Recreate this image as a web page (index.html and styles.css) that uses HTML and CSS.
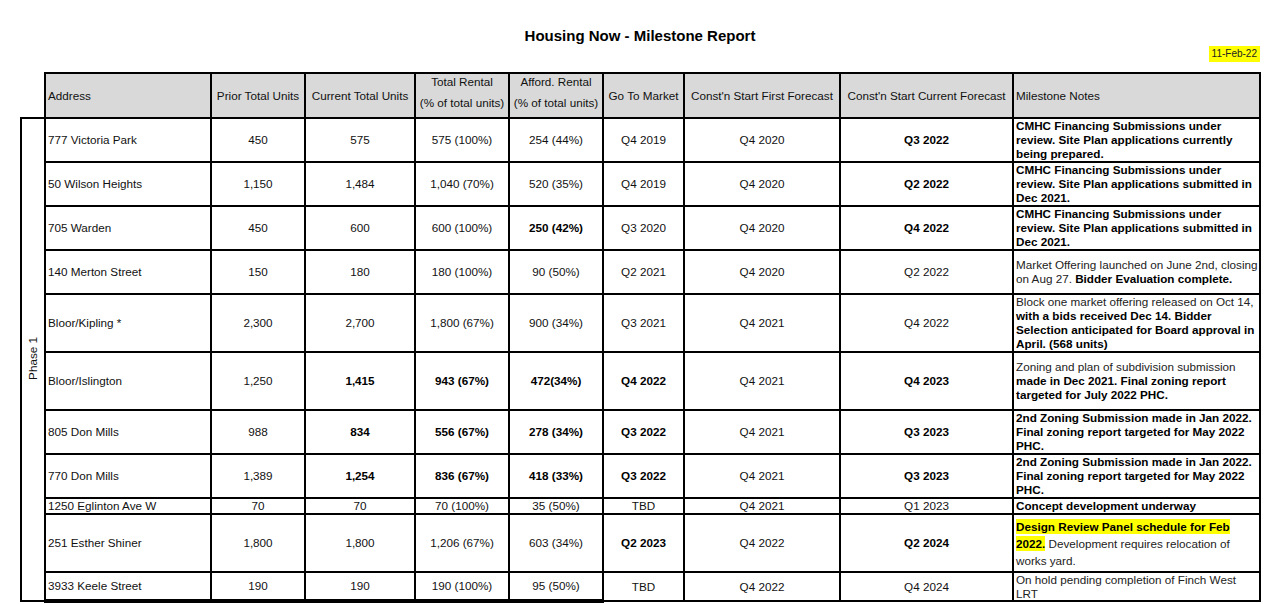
FILE: index.html
```html
<!DOCTYPE html>
<html lang="en">
<head>
<meta charset="UTF-8">
<meta name="viewport" content="width=device-width, initial-scale=1.0">
<title>Housing Now - Milestone Report</title>
<link rel="stylesheet" href="styles.css">
</head>
<body>

<h1 class="title">Housing Now - Milestone Report</h1>
<div class="date-row"><span class="date">11-Feb-22</span></div>

<table class="report">
    <colgroup>
        <col style="width:24px">
        <col style="width:166px">
        <col style="width:94px">
        <col style="width:110px">
        <col style="width:94px">
        <col style="width:94px">
        <col style="width:81px">
        <col style="width:156px">
        <col style="width:173px">
        <col style="width:247px">
    </colgroup>
    <thead>
        <tr class="head-row">
            <th class="blank"></th>
            <th class="left">Address</th>
            <th>Prior Total Units</th>
            <th>Current Total Units</th>
            <th class="two"><div class="l1">Total Rental</div><div class="l2">(% of total units)</div></th>
            <th class="two"><div class="l1">Afford. Rental</div><div class="l2">(% of total units)</div></th>
            <th>Go To Market</th>
            <th>Const'n Start First Forecast</th>
            <th>Const'n Start Current Forecast</th>
            <th class="left">Milestone Notes</th>
        </tr>
    </thead>
    <tbody>
        <tr class="h44">
            <td class="phase" rowspan="11"><span>Phase 1</span></td>
            <td class="addr">777 Victoria Park</td>
            <td>450</td>
            <td>575</td>
            <td>575 (100%)</td>
            <td>254 (44%)</td>
            <td>Q4 2019</td>
            <td>Q4 2020</td>
            <td class="b">Q3 2022</td>
            <td class="notes b">CMHC Financing Submissions under review. Site Plan applications currently being prepared.</td>
        </tr>
        <tr class="h44">
            <td class="addr">50 Wilson Heights</td>
            <td>1,150</td>
            <td>1,484</td>
            <td>1,040 (70%)</td>
            <td>520 (35%)</td>
            <td>Q4 2019</td>
            <td>Q4 2020</td>
            <td class="b">Q2 2022</td>
            <td class="notes b">CMHC Financing Submissions under review. Site Plan applications submitted in Dec 2021.</td>
        </tr>
        <tr class="h44">
            <td class="addr">705 Warden</td>
            <td>450</td>
            <td>600</td>
            <td>600 (100%)</td>
            <td class="b">250 (42%)</td>
            <td>Q3 2020</td>
            <td>Q4 2020</td>
            <td class="b">Q4 2022</td>
            <td class="notes b">CMHC Financing Submissions under review. Site Plan applications submitted in Dec 2021.</td>
        </tr>
        <tr class="h44">
            <td class="addr">140 Merton Street</td>
            <td>150</td>
            <td>180</td>
            <td>180 (100%)</td>
            <td>90 (50%)</td>
            <td>Q2 2021</td>
            <td>Q4 2020</td>
            <td>Q2 2022</td>
            <td class="notes">Market Offering launched on June 2nd, closing on Aug 27. <b>Bidder Evaluation complete.</b></td>
        </tr>
        <tr class="h58">
            <td class="addr">Bloor/Kipling *</td>
            <td>2,300</td>
            <td>2,700</td>
            <td>1,800 (67%)</td>
            <td>900 (34%)</td>
            <td>Q3 2021</td>
            <td>Q4 2021</td>
            <td>Q4 2022</td>
            <td class="notes">Block one market offering released on Oct 14, <b>with a bids received Dec 14. Bidder Selection anticipated for Board approval in April. (568 units)</b></td>
        </tr>
        <tr class="h58">
            <td class="addr">Bloor/Islington</td>
            <td>1,250</td>
            <td class="b">1,415</td>
            <td class="b">943 (67%)</td>
            <td class="b">472(34%)</td>
            <td class="b">Q4 2022</td>
            <td>Q4 2021</td>
            <td class="b">Q4 2023</td>
            <td class="notes">Zoning and plan of subdivision submission <b>made in Dec 2021. Final zoning report targeted for July 2022 PHC.</b></td>
        </tr>
        <tr class="h44">
            <td class="addr">805 Don Mills</td>
            <td>988</td>
            <td class="b">834</td>
            <td class="b">556 (67%)</td>
            <td class="b">278 (34%)</td>
            <td class="b">Q3 2022</td>
            <td>Q4 2021</td>
            <td class="b">Q3 2023</td>
            <td class="notes b">2nd Zoning Submission made in Jan 2022. Final zoning report targeted for May 2022 PHC.</td>
        </tr>
        <tr class="h44">
            <td class="addr">770 Don Mills</td>
            <td>1,389</td>
            <td class="b">1,254</td>
            <td class="b">836 (67%)</td>
            <td class="b">418 (33%)</td>
            <td class="b">Q3 2022</td>
            <td>Q4 2021</td>
            <td class="b">Q3 2023</td>
            <td class="notes b">2nd Zoning Submission made in Jan 2022. Final zoning report targeted for May 2022 PHC.</td>
        </tr>
        <tr class="h15">
            <td class="addr">1250 Eglinton Ave W</td>
            <td>70</td>
            <td>70</td>
            <td>70 (100%)</td>
            <td>35 (50%)</td>
            <td>TBD</td>
            <td>Q4 2021</td>
            <td>Q1 2023</td>
            <td class="notes b">Concept development underway</td>
        </tr>
        <tr class="h58">
            <td class="addr">251 Esther Shiner</td>
            <td>1,800</td>
            <td>1,800</td>
            <td>1,206 (67%)</td>
            <td>603 (34%)</td>
            <td class="b">Q2 2023</td>
            <td>Q4 2022</td>
            <td class="b">Q2 2024</td>
            <td class="notes tall"><b class="mark">Design Review Panel schedule for Feb 2022.</b> Development requires relocation of works yard.</td>
        </tr>
        <tr class="h29 last">
            <td class="addr thick">3933 Keele Street</td>
            <td class="thick">190</td>
            <td class="thick">190</td>
            <td class="thick">190 (100%)</td>
            <td class="thick">95 (50%)</td>
            <td>TBD</td>
            <td>Q4 2022</td>
            <td>Q4 2024</td>
            <td class="notes">On hold pending completion of Finch West LRT</td>
        </tr>
    </tbody>
</table>

</body>
</html>
```

FILE: styles.css
```css
body {
    margin: 0;
    font-family: "Liberation Sans", Arial, sans-serif;
    color: #111;
    background: #fff;
}
.title {
    margin: 0;
    padding-top: 27px;
    font-size: 15px;
    line-height: 17px;
    font-weight: bold;
    text-align: center;
    color: #000;
}
.date-row {
    height: 16px;
    line-height: 16px;
    text-align: right;
    padding-right: 20px;
}
.date {
    display: inline-block;
    background: #ffff00;
    font-size: 10px;
    padding: 0 3px;
    color: #222;
}
.report {
    margin: 12px 0 0 20px;
    border-collapse: collapse;
    table-layout: fixed;
    width: 1241px;
}
.report th,
.report td {
    border: 2px solid #000;
    padding: 0 3px;
    font-size: 11.7px;
    line-height: 14px;
    font-weight: normal;
    text-align: center;
    vertical-align: middle;
    overflow: hidden;
}
.report th {
    background: #d9d9d9;
    white-space: nowrap;
    padding: 0 2px;
}
.report th.blank {
    background: none;
    border: none;
}
.report th.two {
    vertical-align: top;
}
.two .l1 {
    line-height: 16px;
}
.two .l2 {
    line-height: 26px;
}
.report .left,
.report .addr,
.report .notes {
    text-align: left;
}
.report .addr {
    padding-left: 2px;
}
.head-row {
    height: 45px;
}
.h44 { height: 44px; }
.h58 { height: 58px; }
.h15 { height: 15px; }
.h29 { height: 29px; }
.h15 td {
    line-height: 12px;
}
.report .notes {
    padding: 0 0 0 2px;
    line-height: 14px;
    color: #222;
}
.report .notes.tall {
    line-height: 17px;
}
.h29 .notes {
    line-height: 13.5px;
}
.report .b,
.report b {
    font-weight: bold;
    color: #000;
}
.mark {
    background: #ffff00;
    padding: 1px 0;
    -webkit-box-decoration-break: clone;
    box-decoration-break: clone;
}
.report td.phase {
    padding: 0;
}
.phase span {
    display: inline-block;
    writing-mode: vertical-rl;
    transform: rotate(180deg);
}
.report td.thick {
    border-bottom-width: 4px;
}
```
